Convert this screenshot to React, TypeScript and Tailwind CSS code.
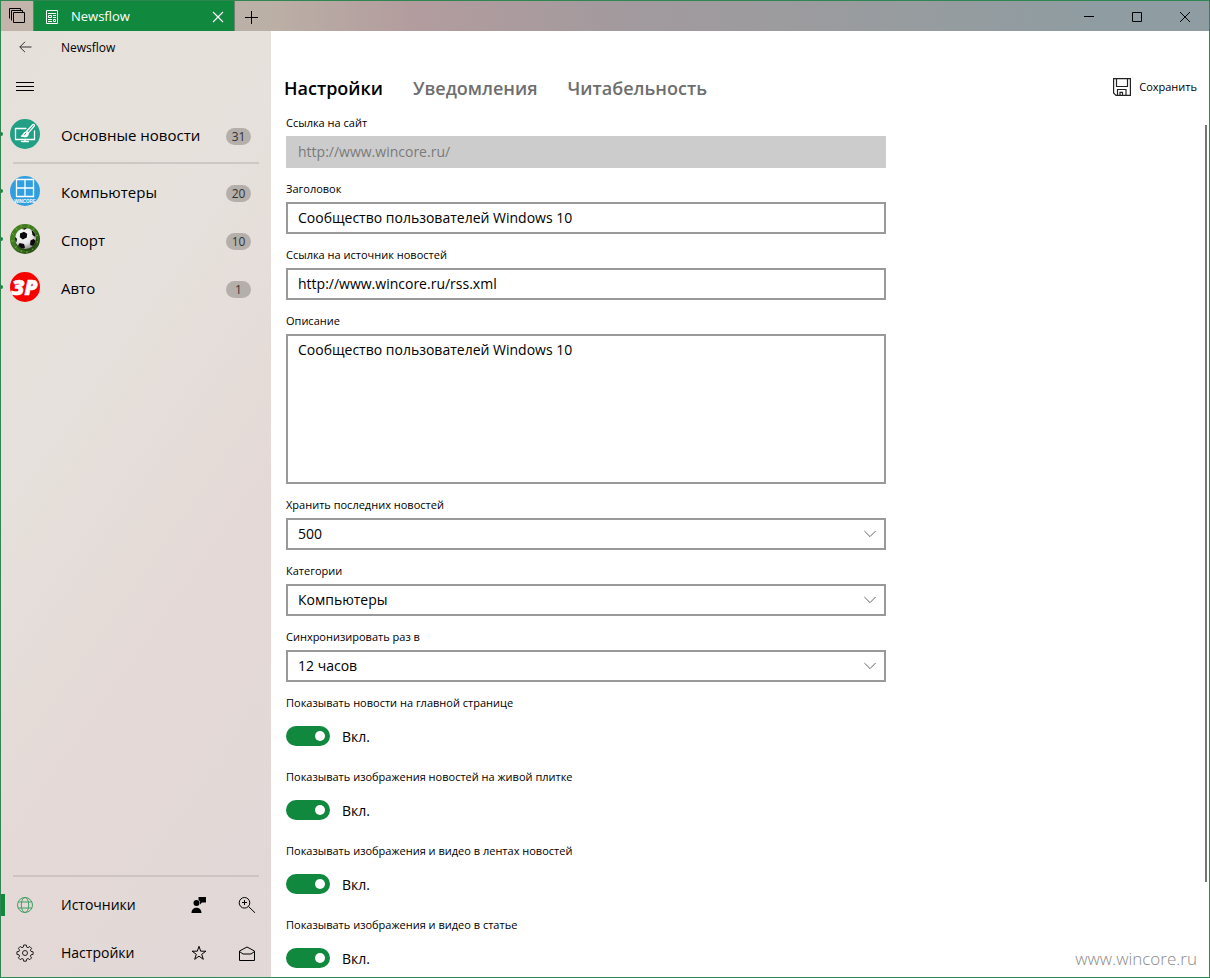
/*
 * ----------------------------------------------
 * Newsflow — настройки источника
 * App.tsx
 * ----------------------------------------------
 */

import { useState, type ReactNode } from 'react'

type Feed = {
  title: string
  count: number
  icon: ReactNode
}

function PaintIcon() {
  return (
    <svg width="30" height="30" viewBox="0 0 30 30" aria-hidden="true">
      <circle cx="15" cy="15" r="15" fill="#22a085" />
      <g fill="none" stroke="#fff" strokeWidth="1.3" strokeLinecap="round" strokeLinejoin="round">
        <path d="M16 9.500H5.500v11h19v-8.500" />
        <path d="M15 20.500v2M11.500 22.500h7" />
        <path d="M16.500 12.500l6.200-6.800c1-.9 2.300.4 1.500 1.400l-5.900 7z" />
        <path d="M16 13.200c1.500 0 2.400 1 2.100 2.300-.6 2.300-3.600 2.500-6.600 1.700 2.200-.7 1.600-3.700 4.500-4z" fill="#fff" />
      </g>
      <path d="M14.200 16.200l2-2.500" stroke="#22a085" strokeWidth="1" />
    </svg>
  )
}

function WincoreIcon() {
  return (
    <svg width="30" height="30" viewBox="0 0 30 30" aria-hidden="true">
      <circle cx="15" cy="15" r="15" fill="#2f9fe0" />
      <path d="M6.500 3.500h17v17h-17zM15 3.500v17M6.500 12h17" fill="none" stroke="#fff" strokeWidth="1.300" />
      <text x="15" y="26.500" fontSize="4.500" fontWeight="700" textAnchor="middle" fill="#fff" fontFamily="Liberation Sans, sans-serif">
        WINCORE
      </text>
    </svg>
  )
}

function BallIcon() {
  return (
    <svg width="30" height="30" viewBox="0 0 30 30" aria-hidden="true">
      <defs>
        <radialGradient id="grass" cx="0.4" cy="0.4" r="0.7">
          <stop offset="0" stopColor="#4c8a22" />
          <stop offset="0.65" stopColor="#3f781f" />
          <stop offset="1" stopColor="#1d3a10" />
        </radialGradient>
        <radialGradient id="ball" cx="0.4" cy="0.3" r="0.75">
          <stop offset="0" stopColor="#ffffff" />
          <stop offset="0.6" stopColor="#e6e6e6" />
          <stop offset="1" stopColor="#858585" />
        </radialGradient>
        <clipPath id="ballClip">
          <circle cx="15.500" cy="14.500" r="10.500" />
        </clipPath>
      </defs>
      <circle cx="15" cy="15" r="15" fill="url(#grass)" />
      <path d="M2 9l2 2M6 4l1 2M11 1l0 2M19 1l-1 2M24 4l-1 2M28 11l-2 1M1 17l3 0M5 24l2-2M28 18l-2 0M23 26l-1-2M11 28l1-2M17 29l0-2" stroke="#6fa83a" strokeWidth="1" />
      <ellipse cx="16" cy="16.500" rx="11" ry="10.500" fill="#10200a" opacity="0.450" />
      <circle cx="15.500" cy="14.500" r="10.500" fill="url(#ball)" />
      <g clipPath="url(#ballClip)" fill="#0b0b0b">
        <path d="M10 9.500l4-1.800 3.200 2 -.4 3.800-4 2-3-2.200z" />
        <path d="M21.500 5.500l4 3.500-.3 4-2.700-2z" />
        <path d="M20.500 16.500l3-1.500 2.500 2-2.500 5-3.500-1z" />
        <path d="M9.500 19l4.500 1 1 3.500-3.500 2.500-4-3z" />
        <path d="M4.500 12l2.500 3-.5 3-2.500-1z" />
        <path d="M11 4.500l4-1.200 2.500.6-3 1.800z" />
      </g>
    </svg>
  )
}

function ZrIcon() {
  return (
    <svg width="30" height="30" viewBox="0 0 30 30" aria-hidden="true">
      <circle cx="15" cy="15" r="15" fill="#f90000" />
      <text x="14.500" y="22.500" fontSize="21" fontWeight="800" fontStyle="italic" textAnchor="middle" fill="#fff" stroke="#fff" strokeWidth="0.600" fontFamily="Open Sans, sans-serif">
        ЗР
      </text>
    </svg>
  )
}

const feeds: Feed[] = [
  { title: 'Основные новости', count: 31, icon: <PaintIcon /> },
  { title: 'Компьютеры', count: 20, icon: <WincoreIcon /> },
  { title: 'Спорт', count: 10, icon: <BallIcon /> },
  { title: 'Авто', count: 1, icon: <ZrIcon /> },
]

const tabs = ['Настройки', 'Уведомления', 'Читабельность']

const toggles = [
  'Показывать новости на главной странице',
  'Показывать изображения новостей на живой плитке',
  'Показывать изображения и видео в лентах новостей',
  'Показывать изображения и видео в статье',
]

const controlClass = 'block w-full border-2 border-[#999999] bg-white px-2.5 text-sm text-black outline-none'

function TitleBar() {
  return (
    <header className="flex h-[30px] shrink-0 bg-[linear-gradient(90deg,#c3b5ac_0%,#bbb0a6_22%,#b39c9e_34%,#a29a9e_52%,#979c9f_75%,#8f9ca1_90%)]">
      <button aria-label="Вкладки" className="flex w-8 items-center justify-center">
        <svg width="18" height="16" viewBox="0 0 18 16" fill="none" stroke="#000">
          <path d="M5.500 4.500h11v10h-11z" />
          <path d="M3.500 12.500v-10h11v2M1.500 10.500v-10h11v2" />
        </svg>
      </button>
      <div className="flex w-[202px] items-center border-x border-[#6f7f70] bg-[#10893e] pt-0.5 pr-1.5 pl-3 text-white">
        <svg width="12" height="14" viewBox="0 0 12 14" fill="none" stroke="#fff" aria-hidden="true">
          <path d="M.5.500h11v13h-11z" />
          <path d="M2 3.500h8M2.500 5.500h3v2h-3zM7 5.500h3M7 7.500h3M2 9.500h4M2 11.500h4M7.500 9.500h2v2h-2z" />
        </svg>
        <span className="ml-[13px] flex-1 text-[13px]">Newsflow</span>
        <button aria-label="Закрыть вкладку" className="p-1">
          <svg width="12" height="12" viewBox="0 0 12 12" stroke="#fff" strokeWidth="1.200">
            <path d="M1 1l10 10M11 1L1 11" />
          </svg>
        </button>
      </div>
      <button aria-label="Новая вкладка" className="flex w-8 items-center justify-center pt-0.5">
        <svg width="13" height="13" viewBox="0 0 13 13" stroke="#000">
          <path d="M0 6.500h13M6.500 0v13" />
        </svg>
      </button>
      <div className="ml-auto flex pt-0.5">
        <button aria-label="Свернуть" className="flex w-12 items-center justify-center">
          <svg width="10" height="10" viewBox="0 0 10 10" stroke="#000">
            <path d="M0 4.500h10" />
          </svg>
        </button>
        <button aria-label="Развернуть" className="flex w-12 items-center justify-center">
          <svg width="10" height="10" viewBox="0 0 10 10" fill="none" stroke="#000">
            <path d="M.5.500h9v9h-9z" />
          </svg>
        </button>
        <button aria-label="Закрыть" className="flex w-12 items-center justify-center">
          <svg width="10" height="10" viewBox="0 0 10 10" stroke="#000">
            <path d="M0 0l10 10M10 0L0 10" />
          </svg>
        </button>
      </div>
    </header>
  )
}

function FeedRow({ feed }: { feed: Feed }) {
  return (
    <a href="#feed" className="relative flex h-12 items-center pr-5 pl-[9px]">
      <span className="absolute left-0 h-1 w-[2px] rounded-r-full bg-[#10893e]" />
      {feed.icon}
      <span className="ml-[21px] flex-1 pt-0.5 text-[15px]">{feed.title}</span>
      <span className="mt-1 w-[25px] rounded-full bg-[#b5afac] text-center text-xs leading-[17px] text-[#333333]">
        {feed.count}
      </span>
    </a>
  )
}

function Sidebar() {
  return (
    <aside className="flex w-[270px] shrink-0 flex-col bg-[linear-gradient(125deg,#e6e0da_0%,#e6e1dc_34%,#e4d9d6_62%,#e1d8d7_100%)]">
      <div className="flex h-8 items-center">
        <button aria-label="Назад" className="flex w-12 justify-center">
          <svg width="13" height="12" viewBox="0 0 13 12" fill="none" stroke="#333">
            <path d="M.8 6H12.500M6 .8L.8 6 6 11.200" />
          </svg>
        </button>
        <span className="ml-3 pt-0.5 text-xs">Newsflow</span>
      </div>
      <button aria-label="Меню" className="flex h-[47px] w-12 items-center justify-center">
        <svg width="18" height="9" viewBox="0 0 18 9" stroke="#000">
          <path d="M0 .5h18M0 4.500h18M0 8.500h18" />
        </svg>
      </button>
      <nav>
        <FeedRow feed={feeds[0]} />
        <hr className="mx-3 mt-1 mb-[3px] border-t-2 border-[#cec7c3]" />
        {feeds.slice(1).map((feed) => (
          <FeedRow key={feed.title} feed={feed} />
        ))}
      </nav>
      <div className="mt-auto">
        <hr className="mx-3 mb-1 border-t-2 border-[#cec5c3]" />
        <div className="relative flex h-12 items-center">
          <span className="absolute left-0 h-[22px] w-1 bg-[#10893e]" />
          <a href="#sources" className="flex flex-1 items-center text-sm">
            <span className="flex w-12 justify-center">
              <svg width="16" height="16" viewBox="0 0 16 16" fill="none" stroke="#3fa065" aria-hidden="true">
                <circle cx="8" cy="8" r="7.500" />
                <ellipse cx="8" cy="8" rx="3.700" ry="7.500" />
                <path d="M1.300 5h13.400M1.300 11h13.400" />
              </svg>
            </span>
            <span className="ml-3">Источники</span>
          </a>
          <button aria-label="Отзыв" className="flex w-12 justify-center">
            <svg width="16" height="16" viewBox="0 0 16 16">
              <circle cx="5.500" cy="6" r="3" />
              <path d="M.5 16c0-7 10-7 10 0zM7.500 0h7.500v5.500h-4l-2 2v-2.500c-.2-1-.8-1.800-1.500-2.300z" />
            </svg>
          </button>
          <button aria-label="Поиск" className="flex w-12 justify-center">
            <svg width="18" height="16" viewBox="0 0 18 16" fill="none" stroke="#000">
              <circle cx="6.500" cy="5.800" r="5.300" />
              <path d="M4 5.500h5M6.500 3v5M10.500 9.500l6.500 6.300" />
            </svg>
          </button>
        </div>
        <div className="flex h-12 items-center">
          <a href="#settings" className="flex flex-1 items-center text-sm">
            <span className="flex w-12 justify-center">
              <svg width="18" height="18" viewBox="0 0 18 18" fill="none" stroke="#222" aria-hidden="true">
                <circle cx="9" cy="9" r="2.500" />
                <path d="M7.700 1h2.600l.4 2.100 1.300.6 1.800-1.200 1.800 1.800-1.200 1.800.6 1.300 2.100.4v2.600l-2.100.4-.6 1.300 1.200 1.800-1.800 1.800-1.800-1.200-1.300.6-.4 2.100H7.700l-.4-2.100-1.300-.6-1.800 1.200-1.800-1.800 1.200-1.800-.6-1.300-2.100-.4V7.800l2.100-.4.6-1.300-1.200-1.800 1.800-1.800L6 3.700l1.300-.6z" />
              </svg>
            </span>
            <span className="ml-3">Настройки</span>
          </a>
          <button aria-label="Избранное" className="flex w-12 justify-center">
            <svg width="16" height="16" viewBox="0 0 16 16" fill="none" stroke="#000">
              <path d="M8 1.300l1.700 4.900h5.200l-4.200 3.100 1.600 5-4.300-3.100-4.300 3.100 1.600-5L1.100 6.200h5.200z" />
            </svg>
          </button>
          <button aria-label="Прочитано" className="flex w-12 justify-center">
            <svg width="16" height="15" viewBox="0 0 16 15" fill="none" stroke="#000">
              <path d="M.5 5L8 1l7.500 4v9.500H.5zM.5 5.500l3.500 2.500h8l3.500-2.500" />
            </svg>
          </button>
        </div>
      </div>
    </aside>
  )
}

function Field({ id, label, children }: { id: string; label: string; children: ReactNode }) {
  return (
    <div>
      <label htmlFor={id} className="mb-0.5 block text-[11px] leading-[22px]">
        {label}
      </label>
      {children}
    </div>
  )
}

function SelectField({ id, label, options }: { id: string; label: string; options: string[] }) {
  return (
    <Field id={id} label={label}>
      <div className="relative">
        <select id={id} className={`${controlClass} h-8 appearance-none`}>
          {options.map((option) => (
            <option key={option}>{option}</option>
          ))}
        </select>
        <svg className="pointer-events-none absolute top-3 right-2.5" width="12" height="8" viewBox="0 0 12 8" fill="none" stroke="#666">
          <path d="M.4 1L6 6.600 11.600 1" />
        </svg>
      </div>
    </Field>
  )
}

function Toggle({ label }: { label: string }) {
  const [checked, setChecked] = useState(true)

  return (
    <label className="block">
      <span className="block text-[11px] leading-[22px]">{label}</span>
      <span className="mt-3 flex h-5 items-center gap-3">
        <input
          type="checkbox"
          role="switch"
          checked={checked}
          onChange={(e) => setChecked(e.target.checked)}
          className="h-5 w-11 appearance-none rounded-full bg-[#999999] p-[5px] before:block before:size-2.5 before:rounded-full before:bg-white checked:bg-[#10893e] checked:before:ml-6"
        />
        <span className="pt-0.5 text-sm">{checked ? 'Вкл.' : 'Откл.'}</span>
      </span>
    </label>
  )
}

function SettingsForm() {
  return (
    <form className="flex max-w-[600px] flex-col gap-2.5">
      <Field id="site" label="Ссылка на сайт">
        <input id="site" disabled defaultValue="http://www.wincore.ru/" className="block h-8 w-full bg-[#cccccc] px-3 pb-0.5 text-sm text-[#7a7a7a]" />
      </Field>
      <Field id="title" label="Заголовок">
        <input id="title" defaultValue="Сообщество пользователей Windows 10" className={`${controlClass} h-8 pb-0.5`} />
      </Field>
      <Field id="source" label="Ссылка на источник новостей">
        <input id="source" defaultValue="http://www.wincore.ru/rss.xml" className={`${controlClass} h-8 pb-0.5`} />
      </Field>
      <Field id="description" label="Описание">
        <textarea id="description" defaultValue="Сообщество пользователей Windows 10" className={`${controlClass} h-[150px] resize-none py-1`} />
      </Field>
      <SelectField id="keep" label="Хранить последних новостей" options={['500', '1000']} />
      <SelectField id="category" label="Категории" options={['Компьютеры', 'Спорт', 'Авто']} />
      <SelectField id="sync" label="Синхронизировать раз в" options={['12 часов', '24 часа']} />
      <div className="flex flex-col gap-5">
        {toggles.map((label) => (
          <Toggle key={label} label={label} />
        ))}
      </div>
    </form>
  )
}

export default function App() {
  const [tab, setTab] = useState(tabs[0])

  return (
    <div className="flex h-screen flex-col border border-[#2f8650] bg-white font-['Open_Sans','Noto_Sans',sans-serif] text-black">
      <TitleBar />
      <div className="flex min-h-0 flex-1">
        <Sidebar />
        <main className="relative flex min-w-0 flex-1 flex-col">
          <div className="flex h-[81px] shrink-0 items-end justify-between pr-3 pb-2.5 pl-[13px]">
            <div role="tablist" className="flex gap-[30px]">
              {tabs.map((name) => (
                <button
                  key={name}
                  role="tab"
                  aria-selected={name === tab}
                  onClick={() => setTab(name)}
                  className="text-lg font-semibold text-[#6e6e6e] aria-selected:text-black"
                >
                  {name}
                </button>
              ))}
            </div>
            <button className="mb-1.5 flex items-center gap-2 text-[11px]">
              <svg width="18" height="18" viewBox="0 0 18 18" fill="none" stroke="#222" strokeWidth="1.200" aria-hidden="true">
                <path d="M.6.600h16.800v16.800H3L.6 15z" />
                <path d="M3.500.600v7.900h11V.600M4.500 17.400v-5.900h8.500v5.900M7 17.400v-3h2.500v3" />
              </svg>
              Сохранить
            </button>
          </div>
          <div className="min-h-0 flex-1 overflow-y-auto pb-5 pl-[15px] [scrollbar-width:none]">
            <SettingsForm />
          </div>
          <span className="absolute top-[94px] right-0.5 bottom-[95px] w-[2px] bg-[#767676]" />
          <span className="absolute right-3 bottom-1.5 text-[17px] font-light text-[#8a8a8a]">www.wincore.ru</span>
        </main>
      </div>
    </div>
  )
}
